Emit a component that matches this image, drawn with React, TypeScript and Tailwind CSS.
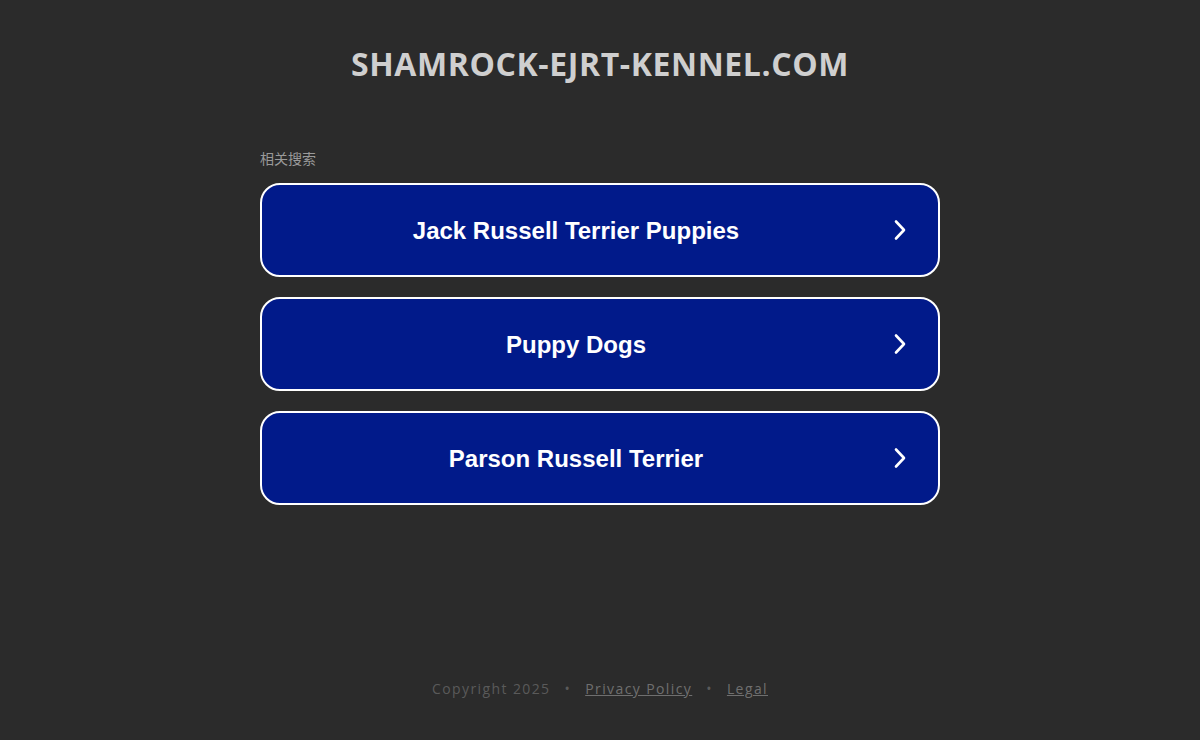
import React from 'react';

const links = ['Jack Russell Terrier Puppies', 'Puppy Dogs', 'Parson Russell Terrier'];

function Chevron() {
  return (
    <svg width="16" height="22" viewBox="0 0 16 22" fill="none" stroke="white" strokeWidth="2.6" strokeLinecap="round" strokeLinejoin="round">
      <path d="M4 2.5 L12 11 L4 19.5" />
    </svg>
  );
}

function App() {
  return (
    <div className="min-h-screen h-[740px] w-full bg-[#2b2b2b] flex flex-col items-center" style={{ fontFamily: '"Open Sans", sans-serif' }}>
      <h1 className="mt-[42px] text-[32px] leading-[44px] font-bold text-[#cfcfcf] tracking-[0.6px]">
        SHAMROCK-EJRT-KENNEL.COM
      </h1>

      <div className="w-[680px] mt-[63px]">
        <div className="text-[14px] leading-[18px] text-[#9a9a9a] mb-[16px]" style={{ fontFamily: '"Noto Sans CJK SC", sans-serif' }}>
          相关搜索
        </div>
        <div className="flex flex-col gap-[20px]">
          {links.map((t) => (
            <a
              key={t}
              href="#"
              className="relative flex items-center justify-center h-[94px] pr-[48px] pt-[1px] rounded-[20px] border-2 border-white bg-[#011a8a] text-white"
              style={{ fontFamily: '"Liberation Sans", Arial, sans-serif' }}
            >
              <span className="text-[24px] font-bold">{t}</span>
              <span className="absolute right-[30px] top-1/2 -translate-y-1/2 flex">
                <Chevron />
              </span>
            </a>
          ))}
        </div>
      </div>

      <div className="mt-auto mb-[41px] flex items-center gap-[14px] text-[14px] tracking-[1.4px] text-[#5a5a5a]">
        <span>Copyright 2025</span>
        <span>•</span>
        <a href="#" className="underline text-[#6f6f6f]">Privacy Policy</a>
        <span>•</span>
        <a href="#" className="underline text-[#6f6f6f]">Legal</a>
      </div>
    </div>
  );
}

export default App;
